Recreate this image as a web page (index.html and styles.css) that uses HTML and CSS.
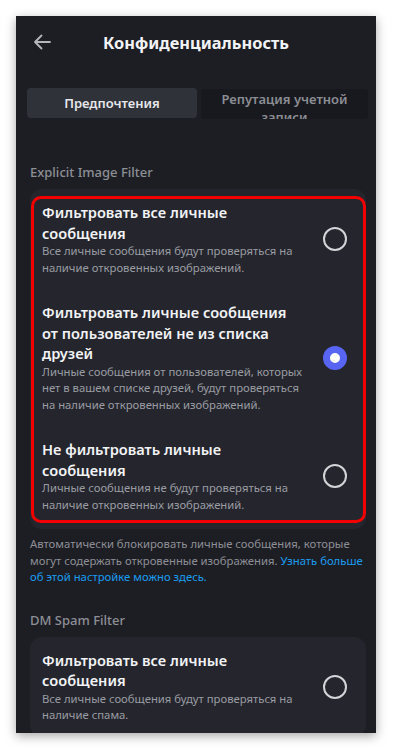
FILE: index.html
```html
<!DOCTYPE html>
<html lang="ru">
<head>
<meta charset="utf-8">
<title>Конфиденциальность</title>
<link rel="stylesheet" href="styles.css">
</head>
<body>
<div class="screen">
  <header class="header">
    <svg class="back" width="18" height="16" viewBox="0 0 18 16"><path d="M17 8H2M8.5 1.5L2 8l6.5 6.5" fill="none" stroke="#b4b6bc" stroke-width="1.8" stroke-linecap="round" stroke-linejoin="round"/></svg>
    <h1 class="title">Конфиденциальность</h1>
  </header>
  <div class="tabs">
    <div class="tab tab-active">Предпочтения</div>
    <div class="tab tab-idle"><span>Репутация учетной записи</span></div>
  </div>
  <main class="content">
    <div class="section-label">Explicit Image Filter</div>
    <div class="card highlighted">
      <div class="option">
        <div class="option-text">
          <div class="option-title">Фильтровать все личные сообщения</div>
          <div class="option-desc">Все личные сообщения будут проверяться на наличие откровенных изображений.</div>
        </div>
        <span class="radio"></span>
      </div>
      <div class="option">
        <div class="option-text">
          <div class="option-title">Фильтровать личные сообщения от пользователей не из списка друзей</div>
          <div class="option-desc">Личные сообщения от пользователей, которых нет в вашем списке друзей, будут проверяться на наличие откровенных изображений.</div>
        </div>
        <span class="radio radio-on"></span>
      </div>
      <div class="option option-last">
        <div class="option-text">
          <div class="option-title">Не фильтровать личные сообщения</div>
          <div class="option-desc">Личные сообщения не будут проверяться на наличие откровенных изображений.</div>
        </div>
        <span class="radio"></span>
      </div>
      <div class="red-frame"></div>
    </div>
    <p class="footnote">Автоматически блокировать личные сообщения, которые могут содержать откровенные изображения. <a class="link" href="#">Узнать больше об этой настройке можно здесь.</a></p>

    <div class="section-label spam-label">DM Spam Filter</div>
    <div class="card">
      <div class="option">
        <div class="option-text">
          <div class="option-title">Фильтровать все личные сообщения</div>
          <div class="option-desc">Все личные сообщения будут проверяться на наличие спама.</div>
        </div>
        <span class="radio"></span>
      </div>
    </div>
  </main>
</div>
</body>
</html>
```
FILE: styles.css
```css
* { box-sizing: border-box; }
html, body { margin: 0; padding: 0; background: #ffffff; }
body { font-family: "Noto Sans", "Open Sans", sans-serif; }

.screen {
  margin: 16px;
  width: 360px;
  height: 717px;
  background: #1d1e24;
  overflow: hidden;
  box-shadow: 0 3px 10px rgba(0,0,0,0.35);
}

.header {
  height: 52px;
  display: flex;
  align-items: center;
  justify-content: center;
  position: relative;
}
.back { position: absolute; left: 17px; top: 18px; }
.title {
  margin: 0;
  font-size: 16.4px;
  font-weight: 700;
  color: #f2f3f5;
}

.tabs {
  margin: 20px 8px 0 11px;
  display: flex;
  gap: 4px;
  height: 31px;
}
.tab {
  height: 30px;
  border-radius: 4px;
  font-size: 13px;
  font-weight: 600;
  text-align: center;
  overflow: hidden;
}
.tab-active {
  width: 170px;
  background: #30323a;
  color: #e6e7ea;
  line-height: 31px;
}
.tab-idle {
  flex: 1;
  margin-top: 1px;
  background: #18191e;
  color: #8b8d94;
  line-height: 18px;
  padding: 0 8px;
}
.tab-idle span { display: block; margin-top: 1px; }

.content { padding: 43px 10px 0 14px; }

.section-label {
  font-size: 13px;
  font-weight: 500;
  color: #8d8f96;
  line-height: 20px;
  margin-bottom: 7px;
}
.spam-label { margin-top: 24px; margin-bottom: 7px; }

.card {
  background: #25262d;
  border-radius: 12px;
  position: relative;
}

.option {
  display: flex;
  align-items: center;
  padding: 13px 19px 13px 12px;
}
.option-last { padding-bottom: 16px; }
.option-text { width: 264px; }
.option-title {
  max-width: 256px;
  font-size: 14.6px;
  font-weight: 600;
  line-height: 20.5px;
  color: #f2f3f5;
}
.option-desc {
  font-size: 11.3px;
  line-height: 16.5px;
  color: #9a9ca3;
}
.radio {
  margin-left: auto;
  width: 24px;
  height: 24px;
  flex: none;
  border-radius: 50%;
  border: 2px solid #d3d4d8;
}
.radio-on {
  border: 7px solid #5865f2;
  background: #ffffff;
}

.red-frame {
  position: absolute;
  top: 7px;
  left: 1px;
  right: 0;
  bottom: 6px;
  border: 3px solid #f20000;
  border-radius: 10px;
  pointer-events: none;
}

.footnote {
  margin: 7px 0 0 0;
  font-size: 11.3px;
  line-height: 16.5px;
  color: #8d8f96;
}
.link { color: #1b9df0; text-decoration: none; }
```
